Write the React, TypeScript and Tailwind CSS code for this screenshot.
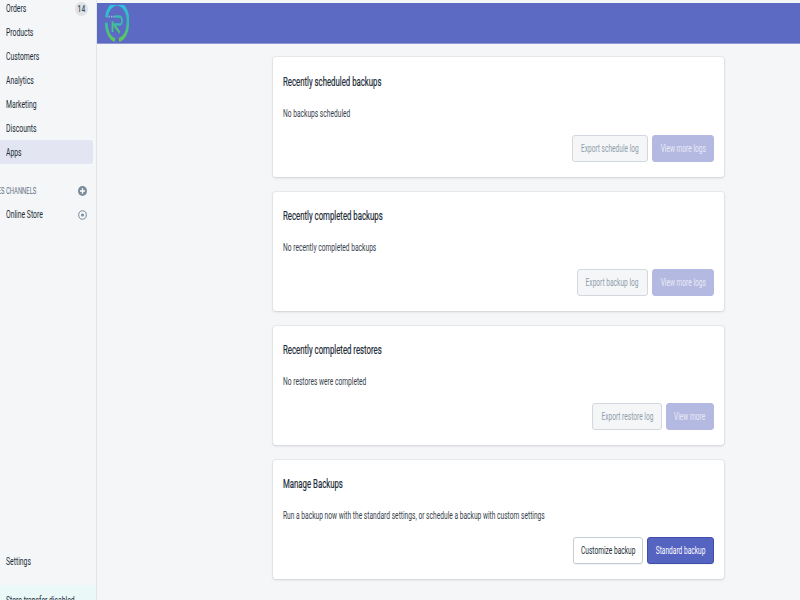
import React from "react";

const font = { fontFamily: 'Roboto,"Liberation Sans",sans-serif' };

function NavLabel({ children }: { children: React.ReactNode }) {
  return (
    <span className="inline-block shrink-0 origin-left scale-x-[.65] text-[10.5px] leading-[14px] text-[#212b36] whitespace-nowrap">
      {children}
    </span>
  );
}

function NavRow({ label, active, badge }: { label: string; active?: boolean; badge?: string }) {
  return (
    <div className={`h-6 w-[93px] flex items-center justify-between pt-[2px] pl-[6px] pr-[5px] rounded-r-[3px] ${active ? "bg-[#e3e6f2]" : ""}`}>
      <NavLabel>{label}</NavLabel>
      {badge && (
        <span className="h-[14px] w-[13px] rounded-full bg-[#dfe3e8] flex items-center justify-center">
          <span className="inline-block scale-x-[.7] text-[9.5px] font-medium text-[#454f5b]">{badge}</span>
        </span>
      )}
    </div>
  );
}

function Btn({ label, w, kind }: { label: string; w: string; kind: "ghost" | "muted" | "outline" | "primary" }) {
  const cls = {
    ghost: "bg-[#f4f6f8] border-[#d3d8de] text-[#919eab]",
    muted: "bg-[#b4b9e1] border-[#b4b9e1] text-[#e9eaf6]",
    outline: "bg-white border-[#c4cdd5] text-[#212b36] shadow-[0_1px_0_rgba(22,29,37,0.05)]",
    primary: "bg-[#5563c1] border-[#3f4eae] text-white shadow-[0_1px_0_rgba(22,29,37,0.05)]",
  }[kind];
  return (
    <div className={`${w} h-[27px] border rounded-[3px] pt-px flex items-center justify-center ${cls}`}>
      <span className="inline-block shrink-0 scale-x-[.66] text-[10px] leading-[14px] whitespace-nowrap">{label}</span>
    </div>
  );
}

function Card({ title, text, children, h, top }: { title: string; text: string; children: React.ReactNode; h: string; top: string }) {
  return (
    <section className={`${h} ${top} w-[451px] bg-white rounded-[3px] shadow-[0_0_0_1px_rgba(63,63,68,0.05),0_1px_3px_0_rgba(63,63,68,0.15)] px-[10px] flex flex-col`}>
      <h2 className="origin-left scale-x-[.65] text-[12px] leading-[14px] text-[#212b36] whitespace-nowrap [-webkit-text-stroke:0.2px_#212b36]">{title}</h2>
      <p className="mt-[18px] origin-left scale-x-[.665] text-[10px] leading-[14px] text-[#37414b] whitespace-nowrap">{text}</p>
      <div className="mt-auto mb-[15px] flex justify-end gap-1">{children}</div>
    </section>
  );
}

function Logo() {
  return (
    <svg width="24" height="37" viewBox="0 0 24 24" preserveAspectRatio="none" className="ml-2">
      <defs>
        <linearGradient id="ring" gradientUnits="userSpaceOnUse" x1="0" y1="0" x2="0" y2="24">
          <stop offset="0" stopColor="#2cc3e0" />
          <stop offset="0.45" stopColor="#35bcae" />
          <stop offset="1" stopColor="#63c94a" />
        </linearGradient>
      </defs>
      <path d="M1.4 8 A10.8 10.8 0 0 1 22.8 12 A10.8 10.8 0 0 1 14 22.7" fill="none" stroke="url(#ring)" strokeWidth="2.6" />
      <path d="M1.3 11.5 A10.8 10.8 0 0 0 10 22.7" fill="none" stroke="url(#ring)" strokeWidth="2.6" />
      <path d="M10 7.5 H14.5 A2.6 2.6 0 0 1 14.5 12.7 H8" fill="none" stroke="#36bdb0" strokeWidth="1.6" />
      <path d="M7.5 10.5 V17.5" fill="none" stroke="#46c28a" strokeWidth="1.8" />
      <path d="M9.5 13.4 L14.8 18" fill="none" stroke="#4cc47a" strokeWidth="1.8" />
      <path d="M3.5 7.5 h1.4 M6 7.5 h1.4 M8.2 7.5 h1.4" stroke="#8fb8d8" strokeWidth="1.2" />
    </svg>
  );
}

export default function App() {
  return (
    <div className="h-[600px] w-[800px] overflow-hidden flex bg-[#f4f6f8]" style={font}>
      <aside className="w-[97px] h-full shrink-0 border-r border-[#e3e5e8] flex flex-col">
        <div className="-mt-1">
          <NavRow label="Orders" badge="14" />
          <NavRow label="Products" />
          <NavRow label="Customers" />
          <NavRow label="Analytics" />
          <NavRow label="Marketing" />
          <NavRow label="Discounts" />
          <NavRow label="Apps" active />
        </div>
        <div className="mt-[14px] h-6 w-[93px] flex items-center justify-between pt-[2px] pr-[6px]">
          <div className="w-9 flex justify-end">
            <span className="inline-block shrink-0 origin-right scale-x-[.62] text-[9.5px] text-[#637381] whitespace-nowrap">SALES CHANNELS</span>
          </div>
          <svg width="9" height="10" viewBox="0 0 9 10">
            <ellipse cx="4.5" cy="5" rx="4.5" ry="5" fill="#798c9c" />
            <path d="M4.5 2.2v5.6M2 5h5" stroke="#fff" strokeWidth="1.3" />
          </svg>
        </div>
        <div className="flex w-[93px] items-center justify-between h-6 pt-[2px] pl-[6px] pr-[6px]">
          <NavLabel>Online Store</NavLabel>
          <svg width="9" height="10" viewBox="0 0 9 10">
            <ellipse cx="4.5" cy="5" rx="3.8" ry="4.2" fill="none" stroke="#798c9c" strokeWidth="1" />
            <circle cx="4.5" cy="5" r="1.5" fill="#798c9c" />
          </svg>
        </div>
        <div className="mt-auto">
          <NavRow label="Settings" />
          <div className="mt-3 h-[15px] w-[96px] bg-[#eaf8f8] pl-[6px] pt-[9px] flex items-start overflow-hidden">
            <NavLabel>Store transfer disabled</NavLabel>
          </div>
        </div>
      </aside>
      <main className="flex-1 flex flex-col pt-[3px]">
        <header className="h-[41px] bg-[#5c6ac4] border-b border-[#8f98d6] flex items-center shrink-0">
          <Logo />
        </header>
        <div className="pt-[13px] pl-[176px] flex flex-col gap-[15px]">
          <Card h="h-[120px]" top="pt-[18px]" title="Recently scheduled backups" text="No backups scheduled">
            <Btn label="Export schedule log" w="w-[76px]" kind="ghost" />
            <Btn label="View more logs" w="w-[62px]" kind="muted" />
          </Card>
          <Card h="h-[119px]" top="pt-[17px]" title="Recently completed backups" text="No recently completed backups">
            <Btn label="Export backup log" w="w-[71px]" kind="ghost" />
            <Btn label="View more logs" w="w-[62px]" kind="muted" />
          </Card>
          <Card h="h-[119px]" top="pt-[17px]" title="Recently completed restores" text="No restores were completed">
            <Btn label="Export restore log" w="w-[70px]" kind="ghost" />
            <Btn label="View more" w="w-[48px]" kind="muted" />
          </Card>
          <Card h="h-[119px]" top="pt-[17px]" title="Manage Backups" text="Run a backup now with the standard settings, or schedule a backup with custom settings">
            <Btn label="Customize backup" w="w-[70px]" kind="outline" />
            <Btn label="Standard backup" w="w-[67px]" kind="primary" />
          </Card>
        </div>
      </main>
    </div>
  );
}
